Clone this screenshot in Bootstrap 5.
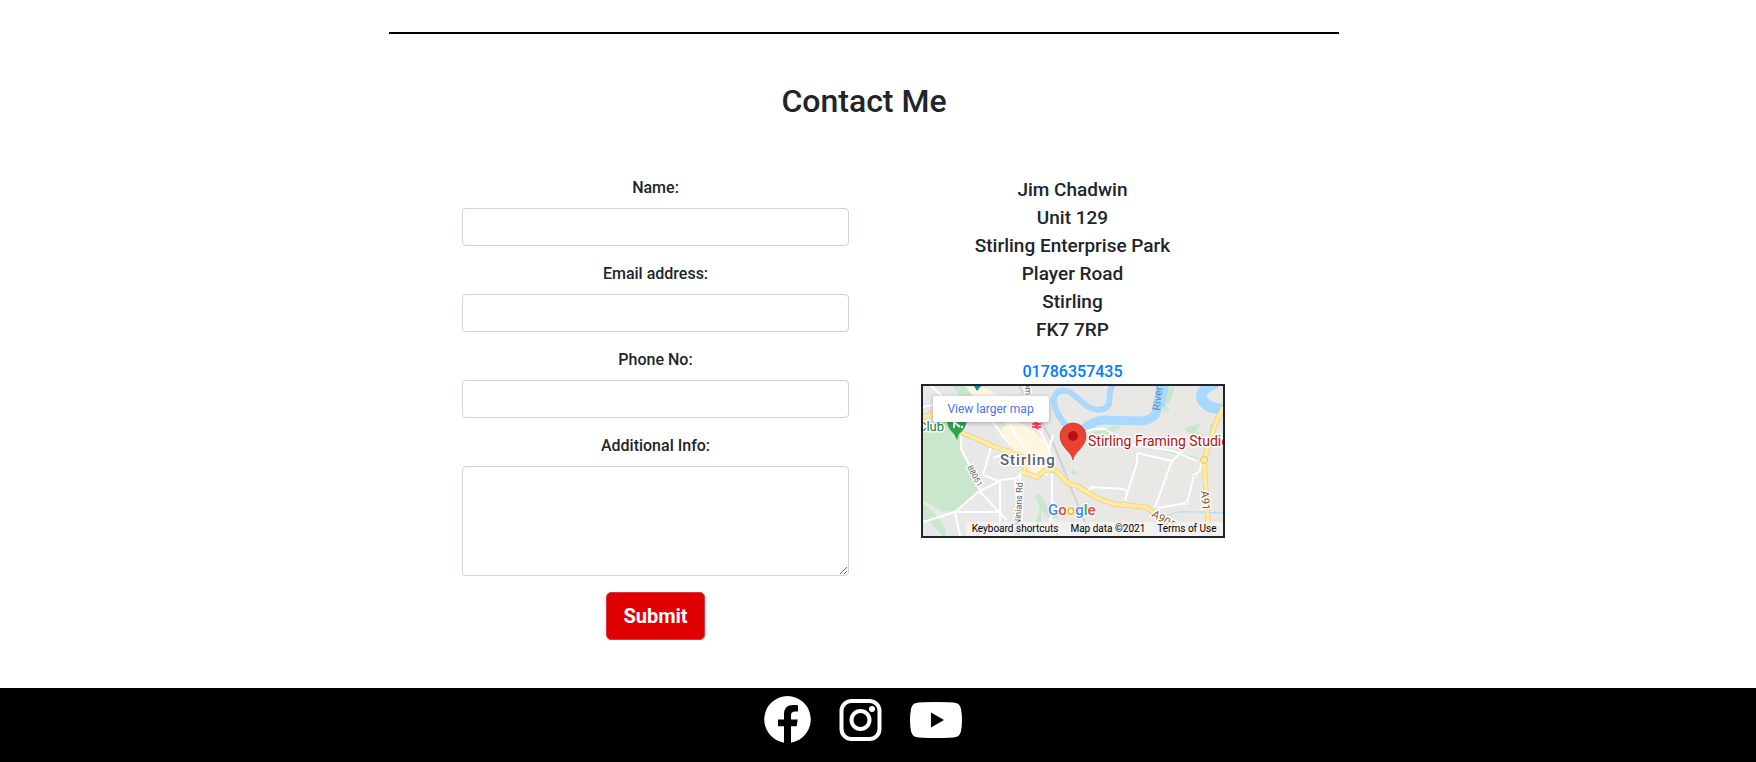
<!DOCTYPE html>
<html lang="en">
<head>
<meta charset="utf-8">
<meta name="viewport" content="width=device-width, initial-scale=1">
<title>Contact Me</title>
<link href="https://cdn.jsdelivr.net/npm/bootstrap@5.3.0/dist/css/bootstrap.min.css" rel="stylesheet">
<style>
  body { font-family: Roboto, "Liberation Sans", sans-serif; font-weight: 500; color: #212529; }
  .page-area { padding-right: 28px; }
  .page-inner { max-width: 950px; }
  .page-rule { border-top: 2px solid #000; opacity: 1; margin: 32px 0 48px; }
  .page-title { font-size: 32px; line-height: 38px; margin-bottom: 56px; }
  .contact-cols { max-width: 804px; }
  .contact-cols .row { --bs-gutter-x: 30px; }
  .form-control { border-color: #ced4da; border-radius: 4px; }
  .btn-send { background: #e00000; border: 1px solid #dc3545; color: #fff; font-size: 20px; font-weight: 700; line-height: 30px; border-radius: 5px; padding: 8px 16px; }
  .btn-send:hover { background: #b80000; color: #fff; }
  .address-block { font-size: 19px; line-height: 28px; }
  .phone-link { color: #007bff; text-decoration: none; }
  .map-box { width: 304px; height: 154px; border: 2px solid #212529; overflow: hidden; font-weight: 400; }
  .map-open { top: 10px; left: 10px; width: 116px; height: 26px; font-size: 12px; line-height: 26px; color: #4d73df; background: #fff; border-radius: 2px; box-shadow: 0 1px 4px rgba(0,0,0,.3); text-decoration: none; }
  .map-terms { right: 0; bottom: 0; height: 14px; font-size: 10px; line-height: 14px; background: rgba(245,245,245,.75); }
  .map-terms a { color: #000; text-decoration: none; padding: 0 6px; }
  .site-footer { background: #000; height: 74px; padding: 8px 30px 0 0; gap: 28px; }
</style>
</head>
<body>
<main class="page-area">
  <div class="page-inner mx-auto text-center overflow-hidden">
    <hr class="page-rule">
    <h2 class="page-title">Contact Me</h2>
    <div class="contact-cols mx-auto">
      <div class="row">
        <form class="col-6">
          <div class="mb-3"><label class="d-block mb-2" for="name">Name:</label><input class="form-control" id="name" type="text"></div>
          <div class="mb-3"><label class="d-block mb-2" for="email">Email address:</label><input class="form-control" id="email" type="email"></div>
          <div class="mb-3"><label class="d-block mb-2" for="phone">Phone No:</label><input class="form-control" id="phone" type="tel"></div>
          <div class="mb-3"><label class="d-block mb-2" for="info">Additional Info:</label><textarea class="form-control" id="info" rows="4"></textarea></div>
          <button class="btn btn-send mb-5" type="submit">Submit</button>
        </form>
        <div class="col-6">
          <address class="address-block mb-3">Jim Chadwin<br>Unit 129<br>Stirling Enterprise Park<br>Player Road<br>Stirling<br>FK7 7RP</address>
          <a class="phone-link d-block" href="tel:01786357435">01786357435</a>
          <div class="map-box position-relative mx-auto">
            <svg class="d-block" width="300" height="150" viewBox="0 0 300 150" role="img" aria-label="Map of Stirling" font-family="Roboto, sans-serif">
              <rect width="300" height="150" fill="#e8e8e8"/>
              <path d="M124 0H300V150H133L140 90Z" fill="#eae8e4"/>
              <!-- parks and woods -->
              <path d="M0 35 29 36 38 48 40 69 54 93 57 103 34 124 20 126 0 114Z" fill="#c9e8cb"/>
              <path d="M30 0H46L56 10H36ZM0 117 12 128 22 141 23 150H19L8 136 0 133ZM112 110l5-2 7 12 12 12h-10l-8-8v18h-7l6-19zM170 46l28-8-2 5-26 11zM240 4l12-4-5 17-9 2zM264 41l14-4-5 9 9 3-8 3-12-8zM287 38l5 1v12h-5zM124 73l5 9-5 2zM149 82l6 6-6 1zM99 143l8-5 6 12H99zM240 16l7 8-7 3z" fill="#c9e8cb"/>
              <path d="M222 59 274 73" stroke="#c9e8cb" stroke-width="3" fill="none"/>
              <!-- built-up centre -->
              <path d="M42 0 62 2 84 14 92 34 112 46 126 60 130 82 124 90 112 88 100 80 92 64 76 48 84 36 66 30 50 10Z" fill="#fef6df"/>
              <!-- river -->
              <g fill="none" stroke="#a9d9fe" stroke-linejoin="round">
                <path d="M149 47C139 35 130 24 131 13 132 5 139 3 147 6L158 15C168 25 181 27 186 18L187 6Q188 1 191-4" stroke-width="6"/>
                <path d="M155 47C163 41 169 35 181 34L218 35C232 34 234 26 236 18L240-3" stroke-width="9"/>
                <path d="M236 20 240-3" stroke-width="12"/>
                <path d="M294-3C276 2 275 13 284 19Q290 23 303 23" stroke-width="11"/>
                <path d="M237 132 255 126 277 126 300 127M228 138l13-8" stroke-width="1"/>
              </g>
              <!-- railway -->
              <path d="M96 0 116 32 130 57 144 91M103 0 118 30M144 92 152 112 162 137 176 150" fill="none" stroke="#d0d1d5" stroke-width="2"/>
              <!-- minor streets -->
              <g fill="none" stroke="#fff" stroke-width="2" stroke-linejoin="round">
                <path d="M38 49V63L53 92 57 106 84 134M0 136 32 126 55 106 79 94 94 92 102 82M32 126H78M32 126 37 150M68 61 60 89 76 95M92 64 70 72M77 94V150M92 93 96 139M129 85V128L124 150M98 86 90 150M0 21 20 17 38 49M8 0 23 14M112 36 126 62 129 85M68 34 88 60M84 34 104 66M126 63 130 49"/>
                <path d="M149 51 170 43 182 43 207 58 250 65 274 75M214 67 249 75 261 64M214 67V77L202 114M249 75 232 121M165 105 169 101 200 103 205 106M235 122 264 117 271 90 277 84 279 74"/>
              </g>
              <circle cx="271" cy="90" r="2" fill="#eae8e4" stroke="#fff"/><circle cx="264" cy="117" r="1.5" fill="#eae8e4" stroke="#fff"/>
              <!-- main roads -->
              <g fill="none" stroke-linejoin="round">
                <path d="M0 31 10 28M36 46 52 52 72 61 99 70 103 76 101 87 114 91 122 84 132 84 146 98 154 100 174 112 190 118 223 121 239 133 252 146 256 151M300 21 292 39 281 74 283 105 286 150" stroke="#ebc668" stroke-width="5"/>
                <path d="M0 31 10 28M36 46 52 52 72 61 99 70 103 76 101 87 114 91 122 84 132 84 146 98 154 100 174 112 190 118 223 121 239 133 252 146 256 151M300 21 292 39 281 74 283 105 286 150" stroke="#ffeba5" stroke-width="4"/>
              </g>
              <circle cx="281" cy="74" r="3.5" fill="#ffeba5" stroke="#ebc668"/>
              <circle cx="130" cy="84" r="3" fill="#ffeba5" stroke="#ebc668" stroke-width=".5"/>
              <!-- pins and labels -->
              <path d="M51 0H58L54 5Z" fill="#00979d"/>
              <path d="M24 34H44Q43 43 36 48L34 54 31 48Q24 42 24 34Z" fill="#34a14e"/>
              <path d="M31 35V42M31 36 37 41" stroke="#fff" stroke-width="2"/><circle cx="39" cy="41" r="1.2" fill="#fff"/>
              <path d="M109 38H118M109 41H118M111 36 116 38 111 41 116 43" fill="none" stroke="#ff2941" stroke-width="1.3"/>
              <g stroke="#fff" stroke-width="3" stroke-linejoin="round" paint-order="stroke">
                <text x="-5" y="45" font-size="13" fill="#188038">Club</text>
                <text x="77" y="79" font-size="15" font-weight="500" letter-spacing="1" fill="#57606b">Stirling</text>
                <text font-size="8" fill="#5b6067" transform="translate(44 81) rotate(62)">B8051</text>
                <text font-size="9" fill="#5b6067" transform="translate(97 150) rotate(-87)">St Ninians Rd</text>
                <text font-size="9" fill="#5b6067" transform="translate(102 -4) rotate(90)">om</text>
                <text font-size="11" fill="#80592c" transform="translate(228 130) rotate(32)">A905</text>
                <text font-size="11" fill="#80592c" transform="translate(278 105) rotate(86)">A91</text>
              </g>
              <text font-size="11" fill="#5491c7" transform="translate(237 25) rotate(-84)">River</text>
              <text x="165" y="60" font-size="14" fill="#b31412" stroke="#fff" stroke-width="3" stroke-linejoin="round" paint-order="stroke">Stirling Framing Studio</text>
              <path d="M150 74C149 66 137 61 137 50A13 13 0 0 1 163 50C163 61 151 66 150 74Z" fill="#ea4335" stroke="#b6352a" stroke-width=".7"/>
              <circle cx="150" cy="50" r="5" fill="#b31412"/>
              <text x="125" y="129" font-size="15" font-weight="500" stroke="#fff" stroke-width="2" paint-order="stroke"><tspan fill="#4285f4">G</tspan><tspan fill="#ea4335">o</tspan><tspan fill="#fbbc04">o</tspan><tspan fill="#4285f4">g</tspan><tspan fill="#34a853">l</tspan><tspan fill="#ea4335">e</tspan></text>
            </svg>
            <a class="map-open position-absolute" href="#map">View larger map</a>
            <div class="map-terms position-absolute d-flex text-nowrap"><a href="#keys">Keyboard shortcuts</a><a href="#data">Map data ©2021</a><a href="#terms">Terms of Use</a></div>
          </div>
        </div>
      </div>
    </div>
  </div>
</main>
<footer class="site-footer d-flex justify-content-center align-items-start">
  <a href="#facebook" aria-label="Facebook"><svg class="d-block" width="47" height="48" viewBox="0 0 47 48"><path d="M23.500 0A23.500 23.500 0 0 0 20 46.700V30.300H14V23.500H20V18.300C20 12.300 23.600 9.100 29 9.100 31.600 9.100 34 9.500 34 9.500V15.500H31C28 15.500 27 17.300 27 19.200V23.500H33.700L32.600 30.300H27V46.700A23.500 23.500 0 0 0 23.500 0Z" fill="#fff"/></svg></a>
  <a href="#instagram" aria-label="Instagram"><svg class="d-block" width="43" height="48" viewBox="0 0 43 48" fill="none" stroke="#fff" stroke-width="4"><rect x="2.500" y="5" width="38" height="38" rx="10"/><circle cx="21.500" cy="24" r="9"/><circle cx="33" cy="13" r="3" fill="#fff" stroke="none"/></svg></a>
  <a href="#youtube" aria-label="YouTube"><svg class="d-block" width="52" height="48" viewBox="0 0 52 48"><path d="M26 6Q42 6 46 7 50 8 51 13 53 24 51 35 50 40 46 41 42 42 26 42 10 42 6 41 2 40 1 35-1 24 1 13 2 8 6 7 10 6 26 6ZM21 16.500V31.500L34 24Z" fill="#fff" fill-rule="evenodd"/></svg></a>
</footer>
<script src="https://cdn.jsdelivr.net/npm/bootstrap@5.3.0/dist/js/bootstrap.bundle.min.js"></script>
</body>
</html>
